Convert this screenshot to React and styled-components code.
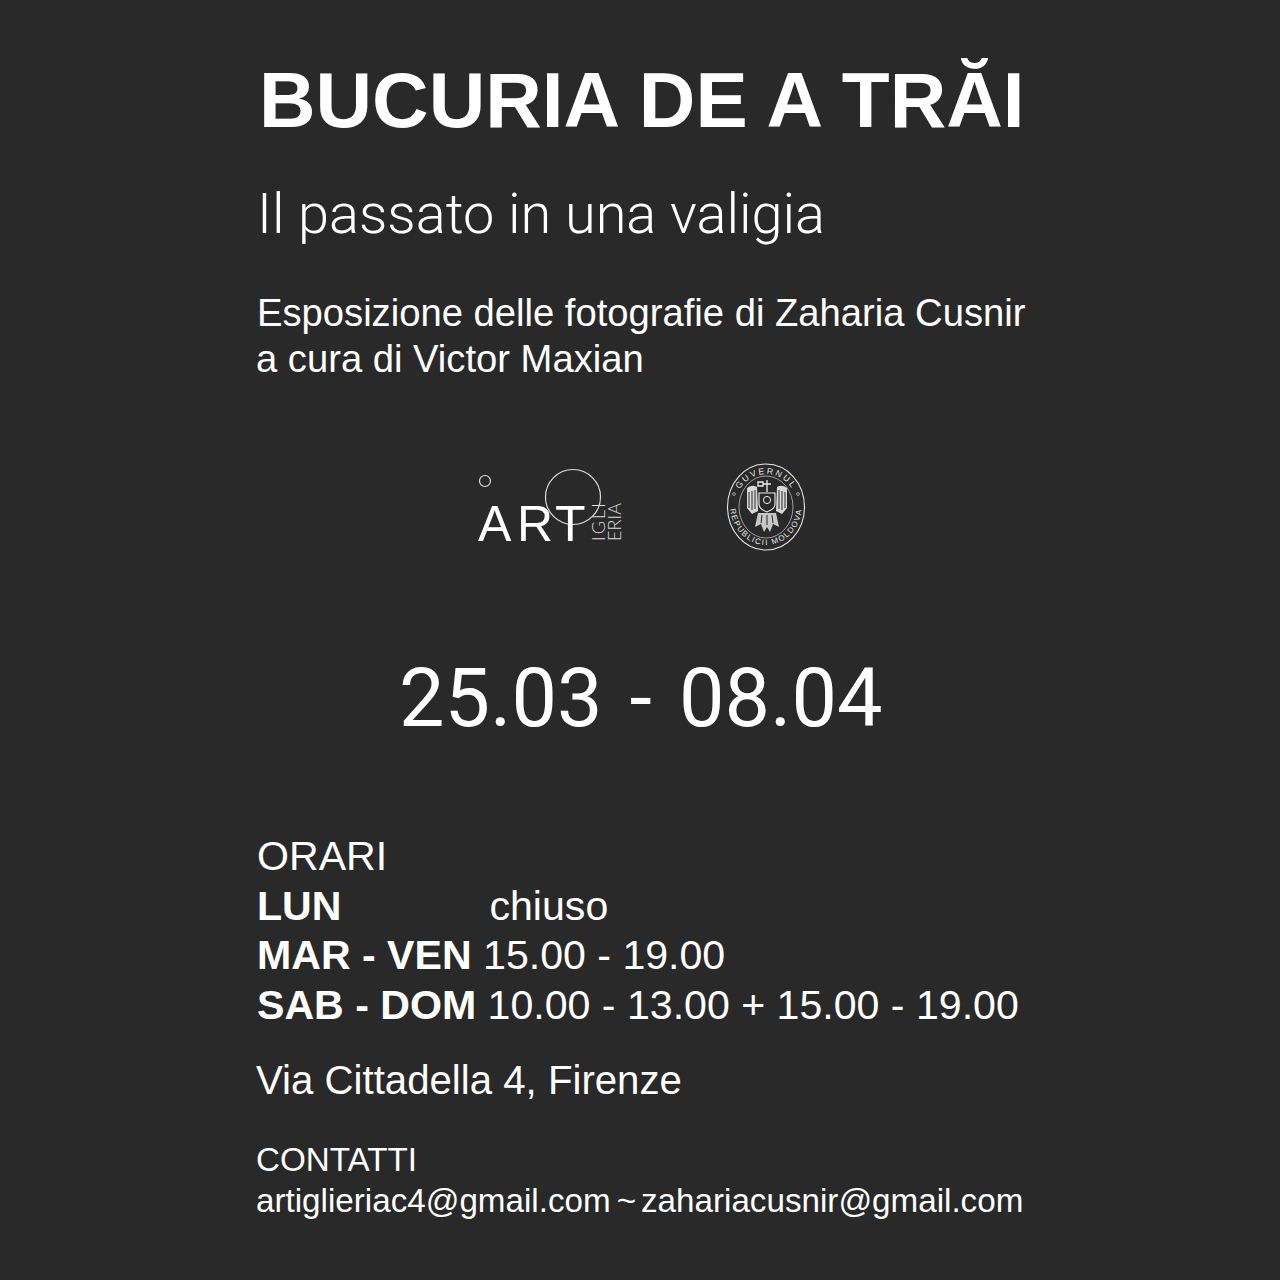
import React from "react";
import styled, { createGlobalStyle } from "styled-components";

const Global = createGlobalStyle`
  html, body { margin: 0; padding: 0; background: #292929; }
`;
const Poster = styled.div`
  width: 1280px; height: 1280px; box-sizing: border-box; background: #292929; color: #fff;
  padding: 62px 0 0 256px; font-family: "Liberation Sans", Arial, sans-serif; overflow: hidden;
`;
const Title = styled.h1`
  margin: 0 0 0 3px; font-size: 78.3px; line-height: 76px; font-weight: 700; white-space: nowrap;
`;
const Subtitle = styled.div`
  margin: 46px 0 0 1px; font-family: Roboto, sans-serif; font-weight: 300; font-size: 55.9px; line-height: 60px; white-space: nowrap;
`;
const Credits = styled.div`
  margin: 46px 0 0 1px; font-size: 38.2px; line-height: 45.5px; white-space: nowrap;
`;
const CreditsSecond = styled.span`margin-left: -1px;`;
const Logos = styled.div`
  display: flex; align-items: flex-start; margin: 82px 0 0 222px; gap: 98px; height: 105px;
`;
const LogoSvg = styled.svg`
  overflow: visible; flex: none; margin-top: ${(p) => p.$top || 0}px;
`;
const Dates = styled.div`
  margin: 86px 0 0 143px; font-family: Roboto, sans-serif; font-size: 81px; line-height: 90px; word-spacing: 7px; white-space: nowrap;
`;
const Hours = styled.div`
  margin: 88px 0 0 1px; font-size: 41.1px; line-height: 49.5px; white-space: nowrap;
`;
const Day = styled.b`font-weight: 700;`;
const Closed = styled.span`margin-left: 148px;`;
const Address = styled.div`
  margin: 26px 0 0; font-size: 40.2px; line-height: 50px; white-space: nowrap;
`;
const Contacts = styled.div`
  margin: 33px 0 0; font-size: 33.2px; line-height: 41px; white-space: nowrap;
`;
const Tilde = styled.span`margin: 0 5px 0 6px;`;

const ArtLogo = () => (
  <LogoSvg $top={9} width="150" height="80" viewBox="0 0 150 80" fill="none">
    <circle cx="7" cy="9" r="5.5" stroke="#ddd" strokeWidth="1.2" />
    <circle cx="95" cy="25" r="27.5" stroke="#ddd" strokeWidth="1.2" />
    <text x="0 39 77" y="69" fill="#fff" fontFamily="Liberation Sans, sans-serif" fontSize="50">ART</text>
    <text transform="translate(127 69) rotate(-90)" fill="#ddd" fontFamily="Lato, sans-serif" fontWeight="300" fontSize="18" textLength="38">IGLI</text>
    <text transform="translate(143 69) rotate(-90)" fill="#ddd" fontFamily="Lato, sans-serif" fontWeight="300" fontSize="18" textLength="38">ERIA</text>
  </LogoSvg>
);

const Seal = () => (
  <LogoSvg width="80" height="88" viewBox="0 0 80 88" fill="none">
    <defs>
      <path id="sealTop" d="M9 44a31 33 0 0 1 62 0" />
      <path id="sealBottom" d="M4 42a36 40 0 0 0 72 0" />
    </defs>
    <ellipse cx="40" cy="44" rx="38.5" ry="43" stroke="#e8e8e8" strokeWidth="1.1" />
    <ellipse cx="40" cy="44" rx="27" ry="31" stroke="#bbb" strokeWidth=".8" />
    <text fill="#e8e8e8" fontFamily="Liberation Sans, sans-serif" fontSize="8.6" letterSpacing="2">
      <textPath href="#sealTop" startOffset="50%" textAnchor="middle">GUVERNUL</textPath>
    </text>
    <text fill="#e8e8e8" fontFamily="Liberation Sans, sans-serif" fontSize="8" letterSpacing="1.4">
      <textPath href="#sealBottom" startOffset="50%" textAnchor="middle">REPUBLICII MOLDOVA</textPath>
    </text>
    <circle cx="8" cy="31" r="1.4" stroke="#ccc" strokeWidth=".7" />
    <circle cx="72" cy="31" r="1.4" stroke="#ccc" strokeWidth=".7" />
    <path d="M21 25q5-4 10-1l1 24-6 3-5-6z" fill="#d8d8d8" />
    <path d="M61 25q-5-4-10-1l-1 24 6 3 5-6z" fill="#d8d8d8" />
    <path d="M23 29v16M26 28v19M29 27v19M59 29v16M56 28v19M53 27v19" stroke="#292929" strokeWidth="1" />
    <path d="M33 30h16v11q0 5-8 8q-8-3-8-8z" stroke="#eee" strokeWidth="1.1" />
    <circle cx="41" cy="37" r="3.6" stroke="#eee" strokeWidth="1" />
    <path d="M41 17v12M37 21h8M32 19h5v4h-5z" stroke="#eee" strokeWidth="1.3" />
    <path d="M32 50l-3 14 6-3 3 8 3-5 3 5 3-8 6 3-3-14z" fill="#c8c8c8" />
    <path d="M36 52l-1 8M41 52v10M46 52l1 8" stroke="#292929" strokeWidth="1" />
  </LogoSvg>
);

export default function App() {
  return (
    <Poster>
      <Global />
      <Title>BUCURIA DE A TRĂI</Title>
      <Subtitle>Il passato in una valigia</Subtitle>
      <Credits>Esposizione delle fotografie di Zaharia Cusnir<br /><CreditsSecond>a cura di Victor Maxian</CreditsSecond></Credits>
      <Logos><ArtLogo /><Seal /></Logos>
      <Dates>25.03 - 08.04</Dates>
      <Hours>
        ORARI<br />
        <Day>LUN</Day><Closed>chiuso</Closed><br />
        <Day>MAR - VEN</Day> 15.00 - 19.00<br />
        <Day>SAB - DOM</Day> 10.00 - 13.00 + 15.00 - 19.00
      </Hours>
      <Address>Via Cittadella 4, Firenze</Address>
      <Contacts>CONTATTI<br />artiglieriac4@gmail.com<Tilde>~</Tilde>zahariacusnir@gmail.com</Contacts>
    </Poster>
  );
}
